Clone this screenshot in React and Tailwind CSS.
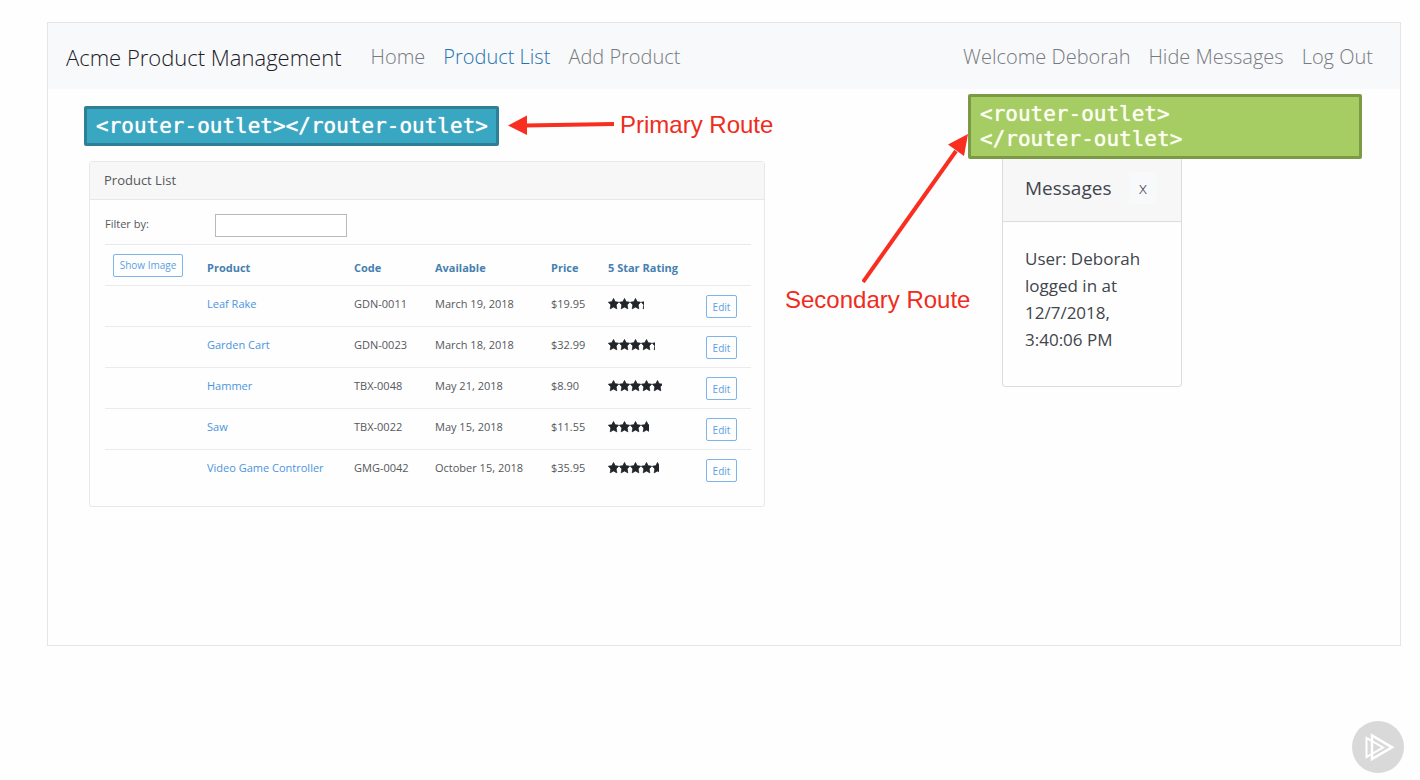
import React from "react";

const products = [
  { name: "Leaf Rake", code: "GDN-0011", date: "March 19, 2018", price: "$19.95", stars: 36 },
  { name: "Garden Cart", code: "GDN-0023", date: "March 18, 2018", price: "$32.99", stars: 47 },
  { name: "Hammer", code: "TBX-0048", date: "May 21, 2018", price: "$8.90", stars: 54 },
  { name: "Saw", code: "TBX-0022", date: "May 15, 2018", price: "$11.55", stars: 41 },
  { name: "Video Game Controller", code: "GMG-0042", date: "October 15, 2018", price: "$35.95", stars: 51 },
];

const headings = ["Product", "Code", "Available", "Price", "5 Star Rating"];

function Stars({ width }) {
  return (
    <div className="h-[15px] overflow-hidden pt-[2px]" style={{ width }} role="img" aria-label="Star rating">
      <svg width="55" height="12" viewBox="0 0 55 12" fill="#212529" stroke="#212529" strokeWidth="0.8">
        {[0, 1, 2, 3, 4].map((i) => (
          <path
            key={i}
            transform={`translate(${i * 11} 0)`}
            d="M5.5 .5 7.1 3.7 10.6 4.2 8.1 6.9 8.8 10.8 5.5 9 2.2 10.8 2.9 6.9 .4 4.2 3.9 3.7Z"
          />
        ))}
      </svg>
    </div>
  );
}

function NavBar() {
  return (
    <nav className="flex h-[66px] items-center bg-[#f8f9fb] pt-px pr-[27px] pl-[18px] text-[20px] font-light text-[#777a80]">
      <a href="#" className="mr-[29px] pt-[2px] text-[22px] text-[#1c2026]">
        Acme Product Management
      </a>
      <div className="flex gap-[18px]">
        <a href="#">Home</a>
        <a href="#" className="text-[#2472b0]">Product List</a>
        <a href="#">Add Product</a>
      </div>
      <div className="ml-auto flex gap-[18px]">
        <span>Welcome Deborah</span>
        <a href="#">Hide Messages</a>
        <a href="#">Log Out</a>
      </div>
    </nav>
  );
}

function ProductCard() {
  return (
    <section className="mt-[15px] ml-[5px] rounded-[3px] border border-[#e8e8e9] text-[11px] text-[#55585c]">
      <h2 className="flex h-[38px] items-center border-b border-[#e8e8e9] bg-[#f7f7f7] px-[14px] text-[13px]">
        Product List
      </h2>
      <div className="px-[15px] pb-[15px]">
        <div className="flex h-[44px] items-start pt-[14px]">
          <label htmlFor="filter" className="w-[110px] pt-[2px]">Filter by:</label>
          <input id="filter" className="h-[23px] w-[132px] border border-[#b9b9ba] bg-white px-1" />
        </div>
        <table className="w-full table-fixed border-collapse text-left">
          <colgroup>
            <col className="w-[94px]" />
            <col className="w-[147px]" />
            <col className="w-[81px]" />
            <col className="w-[116px]" />
            <col className="w-[57px]" />
            <col className="w-[98px]" />
            <col className="w-[53px]" />
          </colgroup>
          <thead>
            <tr className="h-[41px] border-t border-[#e6eaee] align-top">
              <th className="px-2 pt-[9px]">
                <button className="h-[23px] w-[70px] rounded-[2px] border border-[#7db4ea] text-[10px] font-normal whitespace-nowrap text-[#5c9fe2]">
                  Show Image
                </button>
              </th>
              {headings.map((h) => (
                <th key={h} className="px-2 pt-[15px] leading-[15px] font-bold whitespace-nowrap text-[#4680b0]">
                  {h}
                </th>
              ))}
              <th />
            </tr>
          </thead>
          <tbody>
            {products.map((p) => (
              <tr key={p.code} className="h-[41px] border-t border-[#e9ebed] align-top leading-[15px] whitespace-nowrap">
                <td />
                <td className="px-2 pt-[10px]">
                  <a href="#" className="text-[#4a95dd]">{p.name}</a>
                </td>
                <td className="px-2 pt-[10px]">{p.code}</td>
                <td className="px-2 pt-[10px]">{p.date}</td>
                <td className="px-2 pt-[10px]">{p.price}</td>
                <td className="px-2 pt-[10px]"><Stars width={p.stars} /></td>
                <td className="px-2 pt-[9px]">
                  <button className="h-[23px] w-[31px] rounded-[2px] border border-[#7db4ea] pt-px text-[10px] text-[#5c9fe2]">
                    Edit
                  </button>
                </td>
              </tr>
            ))}
          </tbody>
        </table>
      </div>
    </section>
  );
}

function PrimaryRoute() {
  return (
    <div className="min-w-0 pt-[17px]">
      <div className="flex items-center font-['Liberation_Sans',sans-serif] whitespace-nowrap">
        <code className="flex h-[40px] w-[415px] shrink-0 items-center rounded-[2px] border-3 border-[#2f7f96] bg-[#39a6c2] pt-[2px] pl-[9px] font-['DejaVu_Sans_Mono',monospace] text-[21px] text-white [text-shadow:0_0_1px_#ffffff]">
          {"<router-outlet></router-outlet>"}
        </code>
        <svg className="ml-2 shrink-0" width="108" height="22" viewBox="0 0 108 22">
          <path d="M18 10.500 107 9" stroke="#f92d20" strokeWidth="4" />
          <path d="M1 10.500 20 .5V20Z" fill="#f92d20" />
        </svg>
        <span className="ml-[5px] pb-[2px] text-[24px] leading-6 text-[#f02b20]">Primary Route</span>
      </div>
      <ProductCard />
    </div>
  );
}

function SecondaryLabel() {
  return (
    <div className="flex flex-col pt-[44px] pl-[20px] font-['Liberation_Sans',sans-serif]">
      <svg className="self-end" width="106" height="150" viewBox="0 0 106 150">
        <path d="M1 149 94 18" stroke="#f92d20" strokeWidth="4" />
        <path d="M106 1 86 11.500 102 23Z" fill="#f92d20" />
      </svg>
      <span className="mt-[5px] text-[24px] leading-6 whitespace-nowrap text-[#f02b20]">Secondary Route</span>
    </div>
  );
}

function Messages() {
  return (
    <div className="pt-[5px]">
      <code className="block h-[65px] rounded-[2px] border-3 border-[#7c9a45] bg-[#a6cd64] pt-[5px] pl-[9px] font-['DejaVu_Sans_Mono',monospace] text-[21px] leading-[25px] text-[#fdfff2] [text-shadow:0_0_1px_#fdfff2]">
        {"<router-outlet>"}
        <br />
        {"</router-outlet>"}
      </code>
      <aside className="ml-[34px] w-[180px] rounded-b-[4px] border border-t-0 border-[#dcdcdd] text-[#41454c]">
        <div className="flex h-[63px] items-center border-b border-[#dcdcdd] bg-[#f7f7f7] pr-[24px] pb-1 pl-[22px]">
          <h2 className="text-[19px]">Messages</h2>
          <button className="ml-auto h-8 w-7 bg-[#f8f9fb] text-[17px] font-light" aria-label="Close messages">x</button>
        </div>
        <p className="px-[22px] pt-[23px] pb-[33px] text-[17px] leading-[27px]">
          User: Deborah logged in at 12/7/2018, 3:40:06 PM
        </p>
      </aside>
    </div>
  );
}

export default function App() {
  return (
    <div className="flex min-h-screen flex-col justify-between bg-[#fefefe] font-['Open_Sans',sans-serif]">
      <div className="mt-[22px] mr-[19px] ml-[47px] min-h-[624px] border border-[#e5e5e6]">
        <NavBar />
        <main className="grid grid-cols-[minmax(0,681fr)_203px_minmax(0,394fr)] pr-[38px] pl-[36px]">
          <PrimaryRoute />
          <SecondaryLabel />
          <Messages />
        </main>
      </div>
      <svg className="mr-4 mb-[7px] self-end" width="52" height="52" viewBox="0 0 52 52" fill="none">
        <circle cx="26" cy="26" r="26" fill="#d9d9d9" />
        <path d="M14.500 17V36L31 26.500Z" stroke="#fff" strokeWidth="2" />
        <path d="M20 14.500V38L40 26.300Z" stroke="#fff" strokeWidth="2.500" />
      </svg>
    </div>
  );
}
